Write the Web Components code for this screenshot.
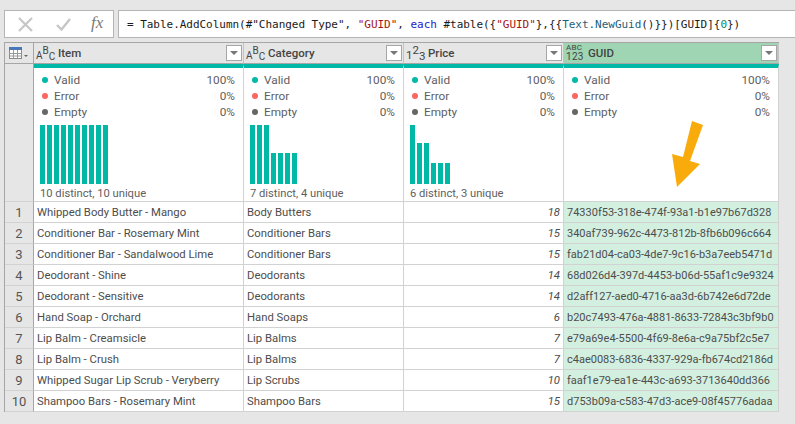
<!DOCTYPE html>
<html>
<head>
<meta charset="utf-8">
<style>
  html, body { margin: 0; padding: 0; background: #e6e6e6; }
  body { width: 795px; height: 424px; overflow: hidden; font-family: Roboto, "Noto Sans", sans-serif; }
</style>
</head>
<body>
<pq-app></pq-app>
<script>
var PROFILE_COLS = [
  { name: "Item", type: "abc", bars: [59,59,59,59,59,59,59,59,59,59], label: "10 distinct, 10 unique" },
  { name: "Category", type: "abc", bars: [59,59,59,31,31,31,31], label: "7 distinct, 4 unique" },
  { name: "Price", type: "num", bars: [59,41,41,21,21,21], label: "6 distinct, 3 unique" },
  { name: "GUID", type: "any", bars: [], label: "", active: true }
];

var ROWS = [
  ["Whipped Body Butter - Mango", "Body Butters", "18", "74330f53-318e-474f-93a1-b1e97b67d328"],
  ["Conditioner Bar - Rosemary Mint", "Conditioner Bars", "15", "340af739-962c-4473-812b-8fb6b096c664"],
  ["Conditioner Bar - Sandalwood Lime", "Conditioner Bars", "15", "fab21d04-ca03-4de7-9c16-b3a7eeb5471d"],
  ["Deodorant - Shine", "Deodorants", "14", "68d026d4-397d-4453-b06d-55af1c9e9324"],
  ["Deodorant - Sensitive", "Deodorants", "14", "d2aff127-aed0-4716-aa3d-6b742e6d72de"],
  ["Hand Soap - Orchard", "Hand Soaps", "6", "b20c7493-476a-4881-8633-72843c3bf9b0"],
  ["Lip Balm - Creamsicle", "Lip Balms", "7", "e79a69e4-5500-4f69-8e6a-c9a75bf2c5e7"],
  ["Lip Balm - Crush", "Lip Balms", "7", "c4ae0083-6836-4337-929a-fb674cd2186d"],
  ["Whipped Sugar Lip Scrub - Veryberry", "Lip Scrubs", "10", "faaf1e79-ea1e-443c-a693-3713640dd366"],
  ["Shampoo Bars - Rosemary Mint", "Shampoo Bars", "15", "d753b09a-c583-47d3-ace9-08f45776adaa"]
];

class PqFormulaBar extends HTMLElement {
  constructor() {
    super();
    this.attachShadow({ mode: "open" });
    this.shadowRoot.innerHTML = `
<style>
  :host { display: flex; gap: 4px; height: 28px; margin-left: 4px; }
  .btns {
    width: 110px; box-sizing: border-box; background: #fff; border: 1px solid #b4b4b4;
    display: flex; align-items: center; padding-left: 13px;
  }
  .btns svg { display: block; }
  .x { margin-right: 23px; }
  .ok { margin-right: 20px; }
  .fx { font: italic 17px "Liberation Serif", serif; color: #7a7a7a; margin-top: -3px; }
  .formula {
    flex: 1; box-sizing: border-box; background: #fff; border: 1px solid #b4b4b4; border-right: 0;
    font: 11px "DejaVu Sans Mono", monospace; letter-spacing: -.03px; color: #1a1a1a;
    display: flex; align-items: center; padding-left: 8px; white-space: pre;
  }
  .s { color: #a31515; }
  .k { color: #2222cc; }
  .f { color: #1f5f7a; }
  .n { color: #098658; }
</style>
<div class="btns">
  <svg class="x" width="15" height="15" viewBox="0 0 15 15"><path d="M1 1 L14 14 M14 1 L1 14" stroke="#c6c6c6" stroke-width="2.2" fill="none"/></svg>
  <svg class="ok" width="15" height="13" viewBox="0 0 15 13"><path d="M1 7 L5.500 11.500 L14 1" stroke="#c6c6c6" stroke-width="2.4" fill="none"/></svg>
  <span class="fx">fx</span>
</div>
<div class="formula"><span>= Table.AddColumn(#"Changed Type", <span class="s">"GUID"</span>, <span class="k">each</span> #table({<span class="s">"GUID"</span>},{{<span class="f">Text.NewGuid</span>()}})[GUID]{<span class="n">0</span>})</span></div>`;
  }
}
customElements.define("pq-formula-bar", PqFormulaBar);

class PqColHeader extends HTMLElement {
  constructor() {
    super();
    this.attachShadow({ mode: "open" });
  }
  connectedCallback() {
    var type = this.getAttribute("type");
    var icon = "";
    if (type === "abc") {
      icon = '<span class="t abc letters"><i>A</i><i class="up">B</i><i class="dn">C</i></span>';
    } else if (type === "num") {
      icon = '<span class="t abc"><i>1</i><i class="up">2</i><i class="dn">3</i></span>';
    } else {
      icon = '<span class="t any"><b>ABC</b><b class="big">123</b></span>';
    }
    this.shadowRoot.innerHTML = `
<style>
  :host {
    display: flex; align-items: center; height: 21px; box-sizing: border-box;
    background: #e6e6e6; border-right: 1px solid #c4c4c4; border-bottom: 1px solid #a6a6a6;
    font-size: 11.500px; font-weight: 500; color: #444; padding-right: 1px;
  }
  :host([active]) { background: #9fd5b2; }
  .t { width: 20px; margin-left: 2px; flex: none; color: #444; }
  .abc { display: flex; line-height: 1; font-weight: 400; height: 20px; align-items: center; }
  .abc i { font-style: normal; font-size: 11.500px; margin-top: 5px; }
  .abc .up { margin-top: -5px; }
  .abc .dn { margin-top: 8px; }
  .letters i { font-size: 10px; }
  .any { display: flex; flex-direction: column; font-size: 8px; line-height: 8px; letter-spacing: .3px; }
  .any b { font-weight: 400; display: block; }
  .any .big { font-size: 10px; line-height: 10px; }
  .name { flex: 1; margin-left: 2px; }
  .drop {
    width: 16px; height: 16px; box-sizing: border-box; background: #fff; border: 1px solid #a6a6a6;
    display: flex; align-items: center; justify-content: center;
  }
  .drop::after {
    content: ""; border-left: 4px solid transparent; border-right: 4px solid transparent;
    border-top: 4px solid #777;
  }
</style>
${icon}<span class="name"><slot></slot></span><span class="drop"></span>`;
  }
}
customElements.define("pq-col-header", PqColHeader);

class PqProfile extends HTMLElement {
  constructor() {
    super();
    this.attachShadow({ mode: "open" });
  }
  connectedCallback() {
    var bars = JSON.parse(this.getAttribute("bars") || "[]");
    var barHtml = bars.map(function(h) {
      return '<span class="bar" style="height:' + h + 'px"></span>';
    }).join("");
    var stat = function(cls, label, pct) {
      return '<div class="stat"><span class="dot ' + cls + '"></span><span class="lb">' + label + '</span><span>' + pct + '</span></div>';
    };
    this.shadowRoot.innerHTML = `
<style>
  :host {
    display: flex; flex-direction: column; box-sizing: border-box; height: 138px; background: #fff;
    border-top: 4px solid #00b8a6; border-right: 1px solid #d2d2d2; border-bottom: 1px solid #d2d2d2;
    padding: 4px 8px 0 6px; font-size: 11.800px; color: #606060;
  }
  .stat { display: flex; align-items: center; height: 16px; line-height: 16px; }
  .lb { flex: 1; }
  .dot { width: 6px; height: 6px; border-radius: 50%; margin: 0 6px 0 2px; }
  .valid { background: #00b8a6; }
  .error { background: #fb6663; }
  .empty { background: #666; }
  .bars { display: flex; align-items: flex-end; gap: 2px; height: 59px; margin: 5px 0 0 0; }
  .bar { width: 5px; background: #00b8a6; }
  .label { height: 16px; line-height: 16px; margin: 2px 0 0 0; white-space: nowrap; font-size: 11.200px; }
</style>
${stat("valid", "Valid", "100%")}${stat("error", "Error", "0%")}${stat("empty", "Empty", "0%")}
<div class="bars">${barHtml}</div>
<div class="label">${this.getAttribute("label") || ""}</div>`;
  }
}
customElements.define("pq-profile", PqProfile);

class PqCell extends HTMLElement {
  constructor() {
    super();
    this.attachShadow({ mode: "open" });
    this.shadowRoot.innerHTML = `
<style>
  :host {
    display: block; box-sizing: border-box; height: 21px; line-height: 22px; padding: 0 3px 0 3px;
    background: #fff; color: #4d4d4d; font-size: 11.300px; white-space: nowrap; overflow: hidden;
    border-right: 1px solid #d2d2d2; border-bottom: 1px solid #d2d2d2;
  }
  :host([kind="num"]) { text-align: right; font-style: italic; padding-right: 3px; }
  :host([kind="guid"]) { background: #d3efe0; font-size: 11px; }
  :host([kind="index"]) {
    background: #e6e6e6; text-align: center; font-size: 13px; color: #555;
    border-right: 1px solid #a6a6a6; padding: 0;
  }
</style>
<slot></slot>`;
  }
}
customElements.define("pq-cell", PqCell);

class PqGrid extends HTMLElement {
  constructor() {
    super();
    this.attachShadow({ mode: "open" });
    var html = `
<style>
  :host {
    display: grid; grid-template-columns: 29px 210px 160px 160px 215px; width: 775px;
    box-sizing: border-box; margin: 4px 0 0 4px;
    border-top: 1px solid #a6a6a6; border-left: 1px solid #a6a6a6;
  }
  .corner {
    display: flex; align-items: center; justify-content: center; height: 21px; box-sizing: border-box;
    background: #e6e6e6; border-right: 1px solid #a6a6a6; border-bottom: 1px solid #a6a6a6;
  }
  .side {
    background: #e6e6e6; border-right: 1px solid #a6a6a6; border-bottom: 1px solid #d2d2d2;
    box-sizing: border-box;
  }
</style>
<div class="corner">
  <svg width="20" height="12" viewBox="0 0 20 12">
    <rect x="0.500" y="0.500" width="12" height="11" fill="#fff" stroke="#8a8a8a"/>
    <rect x="0" y="0" width="13" height="3" fill="#4a78b8"/>
    <path d="M0.500 6.500H12.500M0.500 9H12.500M4.500 3V11.500M8.500 3V11.500" stroke="#9a9a9a" fill="none"/>
    <path d="M15 8H19L17 10Z" fill="#666"/>
  </svg>
</div>`;
    PROFILE_COLS.forEach(function(c) {
      html += '<pq-col-header type="' + c.type + '"' + (c.active ? " active" : "") + ">" + c.name + "</pq-col-header>";
    });
    html += '<div class="side"></div>';
    PROFILE_COLS.forEach(function(c) {
      html += "<pq-profile bars='" + JSON.stringify(c.bars) + "' label='" + c.label + "'></pq-profile>";
    });
    ROWS.forEach(function(r, i) {
      html += '<pq-cell kind="index">' + (i + 1) + "</pq-cell>";
      html += "<pq-cell>" + r[0] + "</pq-cell>";
      html += "<pq-cell>" + r[1] + "</pq-cell>";
      html += '<pq-cell kind="num">' + r[2] + "</pq-cell>";
      html += '<pq-cell kind="guid">' + r[3] + "</pq-cell>";
    });
    this.shadowRoot.innerHTML = html;
  }
}
customElements.define("pq-grid", PqGrid);

class PqApp extends HTMLElement {
  constructor() {
    super();
    this.attachShadow({ mode: "open" });
    this.shadowRoot.innerHTML = `
<style>
  :host { display: block; position: relative; padding-top: 10px; width: 795px; height: 424px; box-sizing: border-box; }
  /* callout drawn on top of the grid */
  .arrow { position: absolute; left: 0; top: 0; pointer-events: none; }
</style>
<pq-formula-bar></pq-formula-bar>
<pq-grid></pq-grid>
<svg class="arrow" width="795" height="424" viewBox="0 0 795 424">
  <path d="M692 121 L703 125 L690 161 L700 164 L677 187 L672 154 L683 157 Z" fill="#f9ab0c"/>
</svg>`;
  }
}
customElements.define("pq-app", PqApp);
</script>
</body>
</html>
